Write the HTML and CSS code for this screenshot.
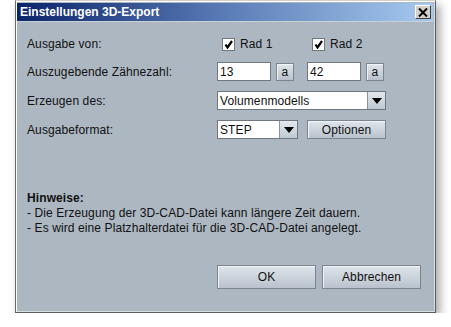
FILE: index.html
```html
<!DOCTYPE html>
<html lang="de">
<head>
    <meta charset="UTF-8">
    <title>Einstellungen 3D-Export</title>
    <link rel="stylesheet" href="styles.css">
</head>
<body>

    <div class="dialog">
        <div class="titlebar">
            <span class="title">Einstellungen 3D-Export</span>
            <span class="close">
                <svg width="10" height="9" viewBox="0 0 10 9"><path d="M1 0.5 L9 8.5 M9 0.5 L1 8.5" stroke="#000" stroke-width="2"/></svg>
            </span>
        </div>

        <div class="content">
            <div class="form">
                <div class="label">Ausgabe von:</div>
                <div class="controls">
                    <label class="check check-1"><span class="box"><svg width="9" height="9" viewBox="0 0 9 9"><path d="M1.5 4.5 L3.5 7.5 L8 1" stroke="#000" stroke-width="2.2" fill="none"/></svg></span>Rad 1</label>
                    <label class="check"><span class="box"><svg width="9" height="9" viewBox="0 0 9 9"><path d="M1.5 4.5 L3.5 7.5 L8 1" stroke="#000" stroke-width="2.2" fill="none"/></svg></span>Rad 2</label>
                </div>

                <div class="label">Auszugebende Zähnezahl:</div>
                <div class="controls">
                    <span class="field small">13</span>
                    <span class="btn mini">a</span>
                    <span class="field small">42</span>
                    <span class="btn mini">a</span>
                </div>

                <div class="label">Erzeugen des:</div>
                <div class="controls">
                    <span class="combo wide"><span class="value">Volumenmodells</span><span class="arrow"></span></span>
                </div>

                <div class="label">Ausgabeformat:</div>
                <div class="controls">
                    <span class="combo narrow"><span class="value">STEP</span><span class="arrow"></span></span>
                    <span class="btn options">Optionen</span>
                </div>
            </div>

            <div class="hints">
                <b>Hinweise:</b><br>
                - Die Erzeugung der 3D-CAD-Datei kann längere Zeit dauern.<br>
                - Es wird eine Platzhalterdatei für die 3D-CAD-Datei angelegt.
            </div>

            <div class="actions">
                <span class="btn big">OK</span>
                <span class="btn big">Abbrechen</span>
            </div>
        </div>
    </div>

</body>
</html>
```

FILE: styles.css
```css
body {
    margin: 0;
    padding: 0;
    background: #ffffff;
    font-family: "Liberation Sans", Arial, sans-serif;
    font-size: 12px;
    letter-spacing: 0.1px;
    color: #111;
}
.dialog {
    margin-left: 15px;
    width: 421px;
    height: 313px;
    box-sizing: border-box;
    border: 1px solid #5c5c5c;
    border-top-color: #d4d0c8;
    border-left-color: #6a6a6a;
    box-shadow: inset 1px 1px 0 #ffffff, inset -1px -1px 0 #d8dde2, 4px 5px 9px rgba(0, 0, 0, 0.35);
    background: #adb7c2;
    padding: 2px 2px 0 1px;
    display: flex;
    flex-direction: column;
}
.titlebar {
    height: 18px;
    background: linear-gradient(to right, #0a246a, #5a7cb6 50%, #a6caf0);
    display: flex;
    align-items: center;
    justify-content: space-between;
    padding: 0 2px 0 3px;
    border-bottom: 1px solid #c9d0d8;
}
.title {
    color: #fff;
    font-family: "Liberation Sans", Arial, sans-serif;
    font-weight: bold;
    font-size: 12px;
    letter-spacing: 0;
}
.close {
    width: 16px;
    height: 14px;
    box-sizing: border-box;
    background: #d4d0c8;
    border: 1px solid;
    border-color: #fff #404040 #404040 #fff;
    display: flex;
    align-items: center;
    justify-content: center;
}
.content {
    flex: 1;
    padding: 14px 0 0 10px;
    display: flex;
    flex-direction: column;
}
.form {
    display: grid;
    grid-template-columns: 190px auto;
    grid-template-rows: 16px 19px 19px 19px;
    row-gap: 10px;
}
.label {
    display: flex;
    align-items: center;
}
.controls {
    display: flex;
    align-items: center;
    gap: 5px;
}
.check {
    display: flex;
    align-items: center;
    gap: 5px;
}
.check-1 {
    width: 85px;
    margin-left: 5px;
}
.box {
    width: 13px;
    height: 13px;
    box-sizing: border-box;
    background: #fff;
    border: 1px solid #6f7780;
    display: flex;
    align-items: center;
    justify-content: center;
}
.field {
    height: 19px;
    box-sizing: border-box;
    background: #fff;
    border: 1px solid #6f7780;
    padding: 0 2px;
    display: flex;
    align-items: center;
}
.small {
    width: 54px;
}
.btn {
    box-sizing: border-box;
    display: flex;
    align-items: center;
    justify-content: center;
    background: linear-gradient(#dfe5eb, #b9c2cc);
    border: 1px solid #7c858f;
    box-shadow: inset 1px 1px 0 #f2f5f8;
    color: #111;
}
.mini {
    width: 18px;
    height: 18px;
    margin-right: 8px;
}
.combo {
    height: 19px;
    box-sizing: border-box;
    background: #fff;
    border: 1px solid #6f7780;
    display: flex;
}
.wide {
    width: 169px;
}
.narrow {
    width: 81px;
    margin-right: 4px;
}
.value {
    flex: 1;
    padding-left: 2px;
    display: flex;
    align-items: center;
}
.arrow {
    width: 17px;
    border-left: 1px solid #8a929b;
    background: linear-gradient(#e3e8ee, #bfc8d1);
    display: flex;
    align-items: center;
    justify-content: center;
}
.arrow::after {
    content: "";
    border-left: 5px solid transparent;
    border-right: 5px solid transparent;
    border-top: 6px solid #000;
}
.options {
    width: 79px;
    height: 19px;
}
.hints {
    margin-top: 52px;
    line-height: 15px;
}
.actions {
    display: flex;
    gap: 6px;
    margin: 29px 0 0 190px;
}
.big {
    width: 99px;
    height: 24px;
}
```
